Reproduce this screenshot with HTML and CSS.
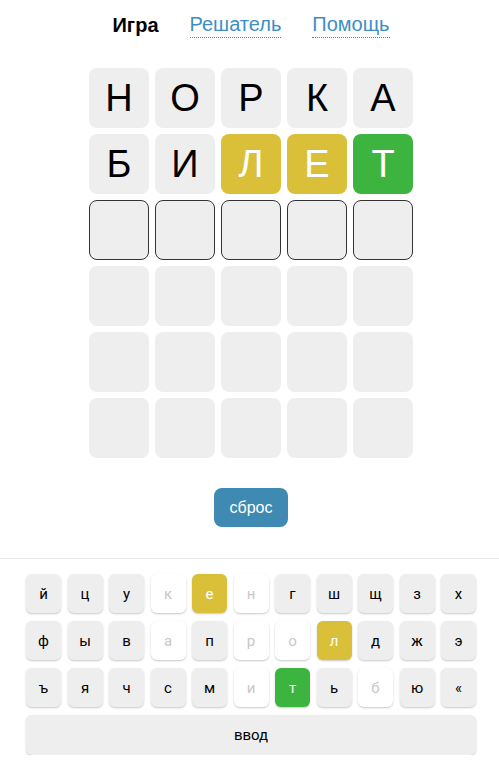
FILE: index.html
```html
<!DOCTYPE html>
<html lang="ru">
<head>
<meta charset="utf-8">
<title>Игра</title>
<link rel="stylesheet" href="styles.css">
</head>
<body>
<div class="page">
  <nav class="nav">
    <span class="nav-item active">Игра</span>
    <a class="nav-item link" href="#">Решатель</a>
    <a class="nav-item link" href="#">Помощь</a>
  </nav>

  <div class="board">
    <div class="tile">Н</div><div class="tile">О</div><div class="tile">Р</div><div class="tile">К</div><div class="tile">А</div>
    <div class="tile">Б</div><div class="tile">И</div><div class="tile present">Л</div><div class="tile present">Е</div><div class="tile correct">Т</div>
    <div class="tile current"></div><div class="tile current"></div><div class="tile current"></div><div class="tile current"></div><div class="tile current"></div>
    <div class="tile"></div><div class="tile"></div><div class="tile"></div><div class="tile"></div><div class="tile"></div>
    <div class="tile"></div><div class="tile"></div><div class="tile"></div><div class="tile"></div><div class="tile"></div>
    <div class="tile"></div><div class="tile"></div><div class="tile"></div><div class="tile"></div><div class="tile"></div>
  </div>

  <div class="reset-wrap"><button class="reset">сброс</button></div>
</div>

<div class="keyboard-area">
  <div class="keyboard">
    <div class="row">
      <button class="key">й</button><button class="key">ц</button><button class="key">у</button><button class="key absent">к</button><button class="key present">е</button><button class="key absent">н</button><button class="key">г</button><button class="key">ш</button><button class="key">щ</button><button class="key">з</button><button class="key">х</button>
    </div>
    <div class="row">
      <button class="key">ф</button><button class="key">ы</button><button class="key">в</button><button class="key absent">а</button><button class="key">п</button><button class="key absent">р</button><button class="key absent">о</button><button class="key present">л</button><button class="key">д</button><button class="key">ж</button><button class="key">э</button>
    </div>
    <div class="row">
      <button class="key">ъ</button><button class="key">я</button><button class="key">ч</button><button class="key">с</button><button class="key">м</button><button class="key absent">и</button><button class="key correct">т</button><button class="key">ь</button><button class="key absent">б</button><button class="key">ю</button><button class="key">«</button>
    </div>
    <div class="row">
      <button class="key enter">ввод</button>
    </div>
  </div>
</div>
</body>
</html>
```

FILE: styles.css
```css
* { box-sizing: border-box; }

html, body {
  margin: 0;
  padding: 0;
  background: #fff;
}

body {
  font-family: "Liberation Sans", Arial, sans-serif;
  color: #000;
  padding-left: 3px;
}

.page {
  display: flex;
  flex-direction: column;
  align-items: center;
}

.nav {
  display: flex;
  gap: 31px;
  padding-top: 13px;
  height: 40px;
  font-size: 20px;
  line-height: 24px;
}

.nav-item.active {
  font-weight: bold;
}

.nav-item.link {
  color: #3d8fc2;
  text-decoration: none;
  border-bottom: 1px dotted #3d8fc2;
  line-height: 23px;
  height: 25px;
}

.board {
  margin-top: 28px;
  display: grid;
  grid-template-columns: repeat(5, 60px);
  grid-auto-rows: 60px;
  gap: 6px;
}

.tile {
  background: #eeeeee;
  border-radius: 8px;
  display: flex;
  align-items: center;
  justify-content: center;
  font-size: 38px;
  color: #000;
}

.tile.present { background: #dabf38; color: #fff; }
.tile.correct { background: #3db43f; color: #fff; }
.tile.current { border: 1px solid #333; }

.reset-wrap {
  margin-top: 30px;
  height: 70px;
}

.reset {
  background: #3f8ab2;
  color: #fff;
  border: none;
  border-radius: 8px;
  width: 74px;
  height: 39px;
  font-family: "Liberation Sans", Arial, sans-serif;
  font-size: 16px;
  padding: 0;
}

.keyboard-area {
  border-top: 1px solid #eaeaea;
  margin-left: -3px;
  padding-left: 3px;
  padding-top: 15px;
}

.keyboard {
  width: 450px;
  margin: 0 auto;
  display: flex;
  flex-direction: column;
  gap: 8px;
}

.row {
  display: flex;
  justify-content: space-between;
}

.key {
  width: 35px;
  height: 39px;
  border: none;
  border-radius: 6px;
  background: #eeeeee;
  box-shadow: 0 1px 2px rgba(0, 0, 0, 0.22);
  font-family: Roboto, "Liberation Sans", sans-serif;
  font-size: 15px;
  color: #000;
  padding: 0;
}

.key.absent { background: #fff; color: #c8c8c8; }
.key.present { background: #dabf38; color: #fff; }
.key.correct { background: #3db43f; color: #fff; }

.key.enter {
  width: 100%;
  height: 40px;
}
```
